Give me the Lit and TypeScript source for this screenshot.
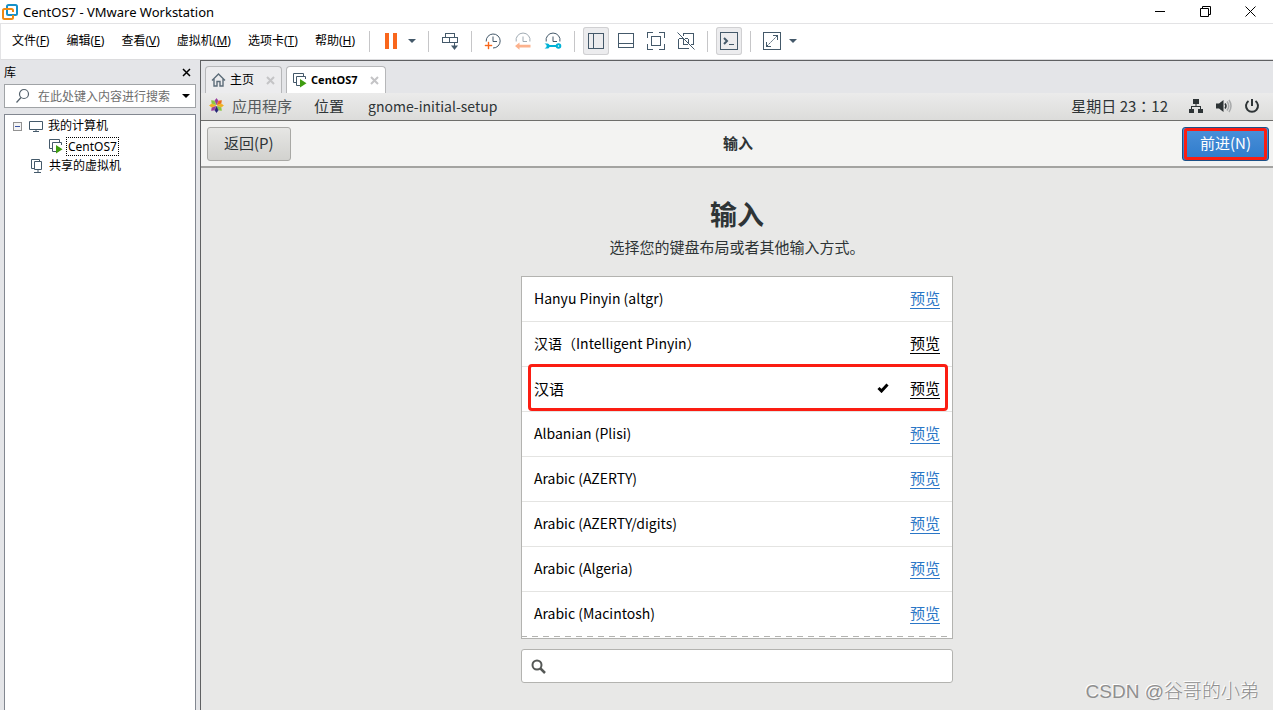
import { LitElement, html, css, svg, nothing, TemplateResult } from "lit";
import { customElement, state } from "lit/decorators.js";
import { classMap } from "lit/directives/class-map.js";

interface Layout {
  name: string;
  seen?: boolean;
}

const MENUS = [
  ["文件", "F"],
  ["编辑", "E"],
  ["查看", "V"],
  ["虚拟机", "M"],
  ["选项卡", "T"],
  ["帮助", "H"],
];

const LAYOUTS: Layout[] = [
  { name: "Hanyu Pinyin (altgr)" },
  { name: "汉语（Intelligent Pinyin）", seen: true },
  { name: "汉语", seen: true },
  { name: "Albanian (Plisi)" },
  { name: "Arabic (AZERTY)" },
  { name: "Arabic (AZERTY/digits)" },
  { name: "Arabic (Algeria)" },
  { name: "Arabic (Macintosh)" },
];

const clock = svg`<path d="M10 5.500v5h4"/>`;

const ICONS: Record<string, TemplateResult> = {
  pause: svg`<path d="M4 2h4v16h-4zM12 2h4v16h-4z" fill="#f9661c" stroke="none"/>` as any,
  send: svg`<g class="crisp"><path d="M5.500 2.500h9v4h-9zM2.500 6.500h15v5h-15zM9.500 6.500v5M14.500 12v5"/></g><path d="M11 14.500h7l-3.500 4.500z" fill="#44596a" stroke="none"/>` as any,
  take: svg`<path d="M3.200 10.500A7 7 0 1 1 10 17"/>${clock}<path d="M5 11h1v3h3v1H6v3H5v-3H2v-1h3z" fill="#f9661c" stroke="#f9661c" stroke-width=".4"/>` as any,
  revert: svg`<g opacity=".5"><path d="M3.200 10.500A7 7 0 1 1 16.900 10.500"/>${clock}</g><path d="M2 15l4.500-3.500v2.200h11v2.800h-11v2.200z" fill="#fcb28d" stroke="none"/>` as any,
  manage: svg`<path d="M3.200 10.500A7 7 0 1 1 16.900 10.500"/>${clock}<path d="M1.500 12.500h3q1.500 0 2 1.500h7v2h-7q-.5 1.500-2 1.500h-3l2-1.500v-2z" fill="#00b2d6" stroke="none"/><circle cx="15.500" cy="15" r="1.800" stroke="#00b2d6" stroke-width="2"/>` as any,
  sidebar: svg`<path class="crisp" d="M2.500 2.500h15v15h-15zM7.500 2.500v15"/>` as any,
  bottom: svg`<path class="crisp" d="M2.500 2.500h15v14h-15zM2.500 12.500h15"/>` as any,
  full: svg`<path class="crisp" d="M1.500 7v-5.500h5.500M13 1.500h5.500v5.500M18.500 13v5.500h-5.500M7 18.500h-5.500v-5.500M5.500 5.500h9v9h-9z"/>` as any,
  unity: svg`<path class="crisp" d="M7.500 5v-2.500h10v11h-3M7.500 8v5.500h4M2.500 7.500h4M2.500 7.500v10h9.500v-1M12.500 7.500v4M9 7.500h3"/><path d="M1.500 1.500l17 17"/>` as any,
  console: svg`<path class="crisp" d="M1.500 1.500h17v17h-17zM10 13.500h5"/><path d="M5 7l3 3-3 3" stroke-width="2"/>` as any,
  stretch: svg`<path class="crisp" d="M1.500 1.500h17v17h-17zM11 4.500h4.500v4.500M4.500 11v4.500h4.500"/><path d="M5 15l10-10" stroke-dasharray="2 1"/>` as any,
};

const icon = (name: string) =>
  html`<svg class="glyph" viewBox="0 0 20 20" aria-hidden="true">${ICONS[name]}</svg>`;

const vmIcon = html`<svg class="vm" viewBox="0 0 16 16" aria-hidden="true">
  <path d="M4 10.500H1.500v-9h10V4M8 13.500H4.500v-9h9V7" fill="none" stroke="#44596a" />
  <path d="M8 7l6.500 4.200L8 15.500z" fill="#3f9c10" />
</svg>`;

@customElement("title-bar")
class TitleBar extends LitElement {
  static styles = css`
    :host {
      display: flex;
      align-items: center;
      height: 23px;
      border-bottom: 1px solid #e3e3e5;
      background: #fff;
    }
    .logo {
      width: 16px;
      height: 16px;
      margin: 0 5px 0 2px;
    }
    .name {
      flex: 1;
      font-size: 13px;
      line-height: 22px;
    }
    .win {
      width: 45px;
      height: 22px;
      padding: 0;
      border: 0;
      background: none;
    }
    .win svg {
      display: block;
      width: 11px;
      height: 11px;
      margin: auto;
      fill: none;
      stroke: #000;
    }
  `;
  render() {
    return html`
      <svg class="logo" viewBox="0 0 16 16" aria-hidden="true">
        <rect x="5" y="1" width="10" height="10" rx="1.500" fill="none" stroke="#1590c8" stroke-width="2" />
        <path d="M5 5H2.500Q1 5 1 6.500v7Q1 15 2.500 15h7q1.500 0 1.500-1.500V11M5 5h4.500Q11 5 11 6.500V8" fill="none" stroke="#f08a12" stroke-width="2" />
      </svg>
      <span class="name">CentOS7 - VMware Workstation</span>
      <button class="win" aria-label="最小化"><svg viewBox="0 0 11 11"><path d="M0 5.500h10" /></svg></button>
      <button class="win" aria-label="还原"><svg viewBox="0 0 11 11"><path d="M.5 2.500h8v8h-8zM2.500 2.500v-2h8v8h-2" /></svg></button>
      <button class="win" aria-label="关闭"><svg viewBox="0 0 11 11"><path d="M.5.5l10 10M10.500.5l-10 10" /></svg></button>
    `;
  }
}

@customElement("tool-bar")
class ToolBar extends LitElement {
  static styles = css`
    :host {
      display: flex;
      align-items: center;
      gap: 4px;
      padding: 3px 0 4px 5px;
      border-bottom: 1px solid #dcdcde;
      border-left: 1px solid #e3e3e5;
      background: #fff;
    }
    .menus {
      display: flex;
      gap: 5px;
    }
    button {
      padding: 0;
      border: 0;
      background: none;
      font: inherit;
      color: inherit;
    }
    .menu {
      padding: 0 6px;
      font-size: 12px;
      line-height: 24px;
      white-space: nowrap;
    }
    .sep {
      width: 1px;
      height: 21px;
      margin: 0 4px;
      background: #c6c6c8;
    }
    .tool {
      display: grid;
      place-items: center;
      width: 26px;
      height: 28px;
      border-radius: 3px;
    }
    .tool.on {
      background: #ececee;
      box-shadow: inset 0 0 0 1px #d0d0d2;
    }
    .glyph {
      width: 20px;
      height: 20px;
      fill: none;
      stroke: #44596a;
    }
    .crisp {
      shape-rendering: crispEdges;
    }
    .caret {
      width: 12px;
      height: 28px;
    }
    .caret svg {
      display: block;
      width: 8px;
      height: 4px;
      fill: #44596a;
    }
  `;
  private tool(name: string, label: string, on = false) {
    return html`<button class=${classMap({ tool: true, on })} aria-label=${label}>${icon(name)}</button>`;
  }
  private caret(label: string) {
    return html`<button class="caret" aria-label=${label}><svg viewBox="0 0 8 4"><path d="M0 0h8L4 4z" /></svg></button>`;
  }
  render() {
    const sep = html`<span class="sep"></span>`;
    return html`
      <nav class="menus">
        ${MENUS.map(([name, key]) => html`<button class="menu">${name}(<u>${key}</u>)</button>`)}
      </nav>
      ${sep}${this.tool("pause", "挂起")}${this.caret("电源")}
      ${sep}${this.tool("send", "发送")}
      ${sep}${this.tool("take", "拍摄快照")}${this.tool("revert", "恢复快照")}${this.tool("manage", "管理快照")}
      ${sep}${this.tool("sidebar", "显示库", true)}${this.tool("bottom", "缩略图")}${this.tool("full", "全屏")}${this.tool("unity", "Unity")}
      ${sep}${this.tool("console", "控制台", true)}
      ${sep}${this.tool("stretch", "拉伸")}${this.caret("拉伸选项")}
    `;
  }
}

@customElement("library-pane")
class LibraryPane extends LitElement {
  static styles = css`
    :host {
      display: flex;
      flex-direction: column;
      padding: 0 4px;
      background: #e4e5e8;
      font-size: 12px;
    }
    .head {
      display: flex;
      justify-content: space-between;
      align-items: center;
      height: 24px;
      padding-right: 5px;
    }
    .close {
      padding: 0;
      border: 0;
      background: none;
    }
    .close svg,
    .drop svg {
      display: block;
    }
    .search {
      display: flex;
      align-items: center;
      height: 22px;
      margin-bottom: 6px;
      border: 1px solid #a0a3a6;
      background: #fff;
    }
    .lens {
      width: 16px;
      height: 16px;
      margin: 0 7px 0 10px;
      flex: none;
    }
    .search input {
      flex: 1;
      min-width: 0;
      padding: 0;
      border: 0;
      outline: 0;
      font: inherit;
    }
    .search input::placeholder {
      color: #6d6d6d;
      opacity: 1;
    }
    .drop {
      padding: 0 5px;
      border: 0;
      background: none;
    }
    .tree {
      flex: 1;
      margin: 0;
      padding: 1px 8px 0;
      border: 1px solid #828790;
      border-bottom: 0;
      background: #fff;
      list-style: none;
      line-height: 20px;
    }
    .tree ul {
      margin: 0;
      padding: 0 0 0 35px;
      list-style: none;
    }
    .node {
      display: flex;
      align-items: center;
      height: 20px;
      gap: 4px;
    }
    .shared {
      padding-left: 16px;
    }
    .expander {
      display: grid;
      place-items: center;
      width: 9px;
      height: 9px;
      margin-right: 2px;
      padding: 0;
      border: 1px solid #929292;
      background: #f4f4f4;
    }
    .expander::before {
      content: "";
      width: 5px;
      height: 1px;
      background: #3a55a5;
    }
    .node svg {
      width: 16px;
      height: 16px;
    }
    .picked {
      margin-left: -2px;
      padding: 0 1px;
      border: 1px dotted #000;
      line-height: 17px;
    }
  `;
  render() {
    return html`
      <div class="head">
        <span>库</span>
        <button class="close" aria-label="关闭">
          <svg width="9" height="9" viewBox="0 0 9 9"><path d="M1 1l7 7M8 1l-7 7" stroke="#000" stroke-width="1.500" /></svg>
        </button>
      </div>
      <div class="search">
        <svg class="lens" viewBox="0 0 16 16" fill="none" stroke="#55626d" stroke-width="1.200">
          <circle cx="9" cy="6" r="4.500" /><path d="M6 9.500l-4.500 5" />
        </svg>
        <input type="text" aria-label="搜索" placeholder="在此处键入内容进行搜索" />
        <button class="drop" aria-label="搜索选项"><svg width="8" height="4"><path d="M0 0h8L4 4z" /></svg></button>
      </div>
      <ul class="tree">
        <li>
          <div class="node">
            <button class="expander" aria-label="折叠"></button>
            <svg viewBox="0 0 16 16" fill="none" stroke="#44596a"><path d="M1.500 3.500h13v8h-13zM8 11.500v2M5 13.500h6" /></svg>
            我的计算机
          </div>
          <ul>
            <li class="node">${vmIcon}<span class="picked">CentOS7</span></li>
          </ul>
        </li>
        <li class="node shared">
          <svg viewBox="0 0 16 16" fill="none" stroke="#44596a">
            <path d="M5 10.500H2.500v-9h8V3M5.500 3.500h7v8h-7zM9 11.500v3M5 14.500h7" />
          </svg>
          共享的虚拟机
        </li>
      </ul>
    `;
  }
}

@customElement("vm-tabs")
class VmTabs extends LitElement {
  static styles = css`
    :host {
      display: flex;
      gap: 4px;
      padding: 5px 4px 0;
      background: #e4e5e8;
      font-size: 12px;
    }
    .tab {
      display: flex;
      align-items: center;
      height: 26px;
      padding: 0 6px 0 5px;
      border: 1px solid #b6b7b9;
      border-bottom: 0;
      border-radius: 4px 4px 0 0;
      background: #ececee;
    }
    .tab.on {
      background: #fff;
      font-weight: 700;
      font-size: 11px;
    }
    .tab svg {
      width: 16px;
      height: 16px;
    }
    button {
      padding: 0;
      border: 0;
      background: none;
      font: inherit;
    }
    .pick {
      display: flex;
      align-items: center;
      gap: 3px;
      margin-right: 12px;
      line-height: 24px;
    }
    .tab .shut svg {
      display: block;
      width: 9px;
      height: 9px;
      stroke: #c4c4c6;
      stroke-width: 2;
    }
  `;
  render() {
    const shut = html`<button class="shut" aria-label="关闭"><svg viewBox="0 0 9 9"><path d="M1 1l7 7M8 1l-7 7" /></svg></button>`;
    return html`
      <div class="tab">
        <button class="pick">
          <svg viewBox="0 0 16 16" fill="none" stroke="#5c6c79" stroke-width="1.400"><path d="M1 8.500L7.500 2 14 8.500M3 7v7h3V9.500h3V14h3V7" /></svg>
          主页
        </button>
        ${shut}
      </div>
      <div class="tab on">
        <button class="pick">${vmIcon}CentOS7</button>
        ${shut}
      </div>
    `;
  }
}

@customElement("guest-screen")
class GuestScreen extends LitElement {
  @state() private selected = 2;

  static styles = css`
    :host {
      display: flex;
      flex-direction: column;
      flex: 1;
      min-height: 0;
      overflow: hidden;
      background: #e8e8e7;
      color: #2e3436;
      font-family: "Noto Sans CJK SC", sans-serif;
      font-size: 15px;
    }
    button {
      font: inherit;
    }
    .panel {
      display: flex;
      align-items: center;
      height: 25px;
      padding: 0 13px 2px 8px;
      border-bottom: 1px solid #6e6e6c;
      background: linear-gradient(#ebebeb, #dcdcda);
    }
    .panel button {
      padding: 0;
      border: 0;
      background: none;
      color: inherit;
      line-height: 24px;
    }
    .panel .apps {
      display: flex;
      align-items: center;
      gap: 8px;
      margin-right: 22px;
      color: #555a5c;
    }
    .places {
      margin-right: 24px;
    }
    .panel .program {
      font-size: 14px;
    }
    .time {
      margin: 0 20px 0 auto;
      font-family: "Noto Sans CJK TC", sans-serif;
    }
    .status {
      display: flex;
      gap: 12px;
    }
    .status svg {
      display: block;
      width: 16px;
      height: 16px;
    }
    .header {
      display: grid;
      grid-template-columns: 1fr auto 1fr;
      align-items: center;
      padding: 6px 4px 5px 6px;
      border-bottom: 2px solid #a3a3a1;
      background: #f3f3f2;
    }
    .title {
      padding-bottom: 4px;
      font-weight: 700;
    }
    .btn {
      justify-self: start;
      height: 34px;
      padding: 0 16px 2px;
      border: 1px solid #a8a8a5;
      border-radius: 3px;
      background: linear-gradient(#e6e6e4, #d2d2cf);
      color: inherit;
      line-height: 28px;
    }
    .next {
      position: relative;
      justify-self: end;
      padding: 0 17px 2px;
      border-color: #1c5187;
      background: linear-gradient(#4a90d9, #2f7bcb);
      color: #fff;
    }
    .next::after {
      content: "";
      position: absolute;
      inset: 0 1px;
      border: 3px solid #fb1d12;
      border-radius: 3px;
    }
    .page {
      width: 432px;
      max-width: 100%;
      margin: 0 auto;
      padding-top: 25px;
    }
    h1 {
      margin: 0;
      font-size: 27px;
      line-height: 42px;
      text-align: center;
    }
    .lead {
      margin: 0 0 17px;
      line-height: 24px;
      text-align: center;
    }
    .list {
      margin: 0 0 10px;
      padding: 0 0 1px;
      border: 1px solid #b3b3b0;
      background: #fff;
      color: #000;
      list-style: none;
    }
    .row {
      position: relative;
      display: flex;
      align-items: center;
      height: 42px;
      padding: 0 12px 2px;
      border-bottom: 1px solid #e4e4e2;
    }
    .row:last-child {
      border-image: repeating-linear-gradient(90deg, #b3b3b0 0 6px, #fff 6px 11px) 1;
    }
    .choose {
      flex: 1;
      padding: 0;
      border: 0;
      background: none;
      color: inherit;
      font-size: 14px;
      text-align: left;
    }
    .choose.han {
      font-size: 15px;
    }
    .tick {
      width: 12px;
      height: 10px;
      margin-right: 21px;
    }
    .preview {
      border-bottom: 1px solid;
      color: #2a76c6;
      line-height: 20px;
      text-decoration: none;
    }
    .preview.seen {
      color: #000;
    }
    .row.marked::after {
      content: "";
      position: absolute;
      inset: -3px 4px 0 6px;
      border: 3px solid #fb1d12;
      border-radius: 4px;
      pointer-events: none;
    }
    .find {
      display: flex;
      align-items: center;
      height: 32px;
      padding: 0 9px;
      border: 1px solid #b3b3b0;
      border-radius: 3px;
      background: #fff;
    }
    .find input {
      flex: 1;
      margin-left: 8px;
      border: 0;
      outline: 0;
      font: inherit;
    }
  `;

  private petals() {
    const colors = ["#9a3c9c", "#e86a1c", "#f0b020", "#8cc63f", "#262577", "#9a3c9c", "#f0b020", "#8cc63f"];
    return colors.map(
      (c, i) => svg`<path d="M8 7L6.200 3 8 .5 9.800 3z" fill=${c} stroke=${c} stroke-width=".6" transform="rotate(${i * 45} 8 8)"/>`
    );
  }

  private row(item: Layout, i: number) {
    const on = i === this.selected;
    return html`
      <li class=${classMap({ row: true, marked: on })}>
        <button class=${classMap({ choose: true, han: item.name.length < 3 })} @click=${() => (this.selected = i)}>${item.name}</button>
        ${on
          ? html`<svg class="tick" viewBox="0 0 12 10"><path d="M1.500 5l3 3 6-6.500" fill="none" stroke="#000" stroke-width="3" /></svg>`
          : nothing}
        <a class=${classMap({ preview: true, seen: !!item.seen })} href="#preview">预览</a>
      </li>
    `;
  }

  render() {
    return html`
      <div class="panel">
        <button class="apps">
          <svg width="15" height="15" viewBox="0 0 16 16" aria-hidden="true">${this.petals()}</svg>应用程序
        </button>
        <button class="places">位置</button>
        <button class="program">gnome-initial-setup</button>
        <span class="time">星期日 23：12</span>
        <div class="status">
          <button aria-label="网络">
            <svg viewBox="0 0 16 16" fill="#2e3436"><path d="M5 1h6v5H5zM1 11h5v4H1zM10 11h5v4h-5zM7.500 6h1v2h-1zM3 8h10v3h-1V9H4v2H3z" /></svg>
          </button>
          <button aria-label="音量">
            <svg viewBox="0 0 16 16" fill="none"><path d="M0 5.500h3L7.500 2v12L3 10.500H0z" fill="#2e3436" /><path d="M9 5.500q2 2.500 0 5" stroke="#2e3436" stroke-width="1.500" /><path d="M11 3.500q3.500 4.500 0 9M13 2q4 6 0 12" stroke="#a8aaab" stroke-width="1.500" /></svg>
          </button>
          <button aria-label="电源">
            <svg viewBox="0 0 16 16" fill="none" stroke="#2e3436" stroke-width="2"><path d="M4.500 3a6 6 0 1 0 7 0M8 1v7" /></svg>
          </button>
        </div>
      </div>
      <div class="header">
        <button class="btn">返回(P)</button>
        <span class="title">输入</span>
        <button class="btn next">前进(N)</button>
      </div>
      <main class="page">
        <h1>输入</h1>
        <p class="lead">选择您的键盘布局或者其他输入方式。</p>
        <ul class="list">
          ${LAYOUTS.map((item, i) => this.row(item, i))}
        </ul>
        <label class="find">
          <svg width="15" height="15" viewBox="0 0 15 15" fill="none" stroke="#555856" stroke-width="2"><circle cx="6" cy="6" r="4.500" /><path d="M9 9l5 5" stroke-width="2.500" /></svg>
          <input type="text" aria-label="搜索输入法" />
        </label>
      </main>
    `;
  }
}

@customElement("app-root")
class AppRoot extends LitElement {
  static styles = css`
    :host {
      position: relative;
      display: flex;
      flex-direction: column;
      height: 100vh;
      overflow: hidden;
      background: #e4e5e8;
      color: #000;
      font-family: "Noto Sans", "Noto Sans CJK SC", sans-serif;
    }
    .body {
      display: grid;
      grid-template-columns: 200px 1fr;
      flex: 1;
      min-height: 0;
    }
    .work {
      display: flex;
      flex-direction: column;
      min-width: 0;
      min-height: 0;
      border-top: 1px solid #5f6062;
      border-left: 1px solid #5f6062;
    }
    .mark {
      position: absolute;
      right: 14px;
      bottom: 3px;
      color: #8f8f8f;
      font: 19px/30px "Liberation Sans", "Noto Sans CJK SC", sans-serif;
      font-weight: 300;
      text-shadow: -1px -1px 0 #fff;
    }
  `;
  render() {
    return html`
      <title-bar></title-bar>
      <tool-bar></tool-bar>
      <div class="body">
        <library-pane></library-pane>
        <div class="work">
          <vm-tabs></vm-tabs>
          <guest-screen></guest-screen>
        </div>
      </div>
      <span class="mark">CSDN @谷哥的小弟</span>
    `;
  }
}
